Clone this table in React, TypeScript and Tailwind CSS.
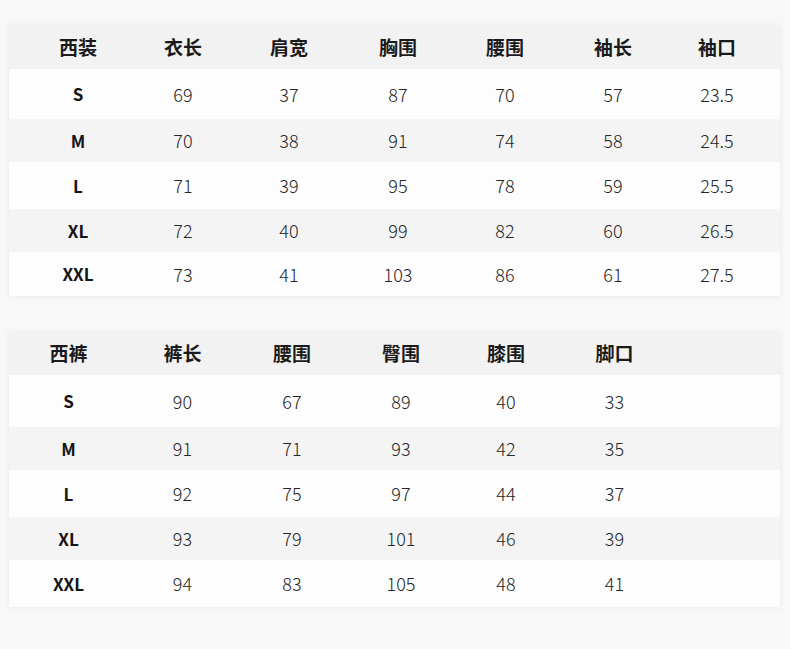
import React from 'react';

const font = { fontFamily: '"Noto Sans CJK SC", "Noto Sans", sans-serif' };

const suitHead = ['西装', '衣长', '肩宽', '胸围', '腰围', '袖长', '袖口'];
const suitRows = [
  ['S', '69', '37', '87', '70', '57', '23.5'],
  ['M', '70', '38', '91', '74', '58', '24.5'],
  ['L', '71', '39', '95', '78', '59', '25.5'],
  ['XL', '72', '40', '99', '82', '60', '26.5'],
  ['XXL', '73', '41', '103', '86', '61', '27.5'],
];

const pantsHead = ['西裤', '裤长', '腰围', '臀围', '膝围', '脚口'];
const pantsRows = [
  ['S', '90', '67', '89', '40', '33'],
  ['M', '91', '71', '93', '42', '35'],
  ['L', '92', '75', '97', '44', '37'],
  ['XL', '93', '79', '101', '46', '39'],
  ['XXL', '94', '83', '105', '48', '41'],
];

const suitHeights = ['h-[50px]', 'h-[43px]', 'h-[47px]', 'h-[43px]', 'h-[44px]'];
const pantsHeights = ['h-[52px]', 'h-[43px]', 'h-[47px]', 'h-[43px]', 'h-[47px]'];

interface SizeTableProps {
  head: string[];
  rows: string[][];
  heights: string[];
  cols: string;
}

function SizeTable({ head, rows, heights, cols }: SizeTableProps) {
  return (
    <div className="bg-[#fdfdfd] shadow-[0_0_6px_rgba(0,0,0,0.07)]">
      <div className={`grid h-[43px] items-center bg-[#f2f2f2] ${cols}`}>
        {head.map((h) => (
          <div key={h} className="text-center text-[19px] font-bold text-[#1a1a1a]">
            {h}
          </div>
        ))}
      </div>
      {rows.map((row, i) => (
        <div
          key={row[0]}
          className={`grid items-center ${cols} ${heights[i]} ${i % 2 === 1 ? 'bg-[#f4f4f4]' : 'bg-[#fdfdfd]'}`}
        >
          {row.map((cell, j) => (
            <div
              key={j}
              className={
                j === 0
                  ? 'text-center text-[17px] font-semibold text-[#151515]'
                  : 'text-center text-[18px] font-light text-[#262626]'
              }
            >
              {cell}
            </div>
          ))}
        </div>
      ))}
    </div>
  );
}

export default function App() {
  return (
    <div className="min-h-[649px] w-[790px] bg-[#f8f8f8] px-[9px] pt-[26px] pb-[42px]" style={font}>
      <div className="w-[771px]">
        <SizeTable
          head={suitHead}
          rows={suitRows}
          heights={suitHeights}
          cols="grid-cols-[106px_104px_108px_110px_104px_112px_96px] pl-[16px]"
        />
      </div>
      <div className="mt-[36px] w-[771px]">
        <SizeTable
          head={pantsHead}
          rows={pantsRows}
          heights={pantsHeights}
          cols="grid-cols-[119px_109px_110px_108px_102px_115px]"
        />
      </div>
    </div>
  );
}
